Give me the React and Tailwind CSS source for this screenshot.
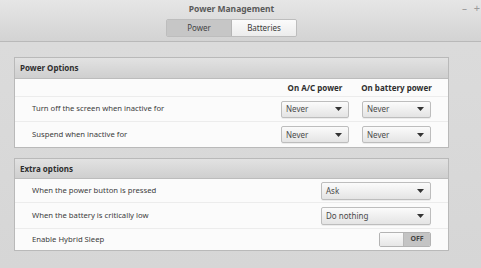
import React from "react";

const Caret = () => (
  <svg width="7" height="4" viewBox="0 0 7 4" className="shrink-0">
    <path d="M0 0 L7 0 L3.5 4 Z" fill="#333" />
  </svg>
);

function Combo({ label, w, h = "h-[17px]" }) {
  return (
    <div
      className={`${w} ${h} flex items-center justify-between pl-[4px] pr-[6px] rounded-[2px] border border-[#bdbdbd] bg-gradient-to-b from-[#fbfbfb] to-[#e4e4e4] text-[8px] text-[#4a4a4a] shadow-[0_1px_0_rgba(0,0,0,0.06)]`}
    >
      <span>{label}</span>
      <Caret />
    </div>
  );
}

function Row({ label, h, children, last }) {
  return (
    <div
      className={`${h} flex items-center pl-[17px] pr-[17px] ${last ? "" : "border-b border-[#ececec]"}`}
    >
      <div className="flex-1 text-[7.7px] text-[#3c3c3c]">{label}</div>
      {children}
    </div>
  );
}

function PanelHeader({ title, h }) {
  return (
    <div
      className={`${h} flex items-center pl-[5px] border-b border-[#bcbcbc] bg-gradient-to-b from-[#e2e2e2] to-[#cfcfcf] text-[8px] font-bold text-[#2e2e2e]`}
    >
      {title}
    </div>
  );
}

export default function App() {
  return (
    <div
      className="w-[481px] h-[268px] overflow-hidden bg-gradient-to-b from-[#dcdcdc] to-[#d6d6d6]"
      style={{ fontFamily: '"Noto Sans", "Open Sans", sans-serif' }}
    >
      {/* Title bar */}
      <div className="relative h-[42px] border-b border-[#b9b9b9] bg-gradient-to-b from-[#e6e6e6] to-[#d3d3d3] flex flex-col items-center pr-[18px]">
        <div className="pt-[2px] h-[19px] text-[8.5px] font-bold text-[#5a5a5a] leading-[14px]">
          Power Management
        </div>
        <div className="flex h-[18px] border border-[#bdbdbd] rounded-[2px] overflow-hidden text-[8px] text-[#3a3a3a]">
          <div className="w-[65px] flex items-center justify-center bg-[#c6c6c6] border-r border-[#b5b5b5] text-[#444]">
            Power
          </div>
          <div className="w-[64px] flex items-center justify-center bg-gradient-to-b from-[#fbfbfb] to-[#ececec]">
            Batteries
          </div>
        </div>
        <div className="absolute right-[14px] top-[2px] text-[10px] text-[#9a9a9a] leading-[12px]">–</div>
        <div className="absolute right-[1px] top-[2px] text-[11px] text-[#9a9a9a] leading-[12px]">+</div>
      </div>

      <div className="pl-[14px] pr-[32px] pt-[15px] flex flex-col gap-[10px]">
        {/* Power Options */}
        <div className="border border-[#b9b9b9] bg-[#fbfbfb]">
          <PanelHeader title="Power Options" h="h-[21px]" />
          <div className="h-[18px] flex items-center pr-[17px] border-b border-[#ececec] text-[8px] font-bold text-[#2e2e2e] whitespace-nowrap">
            <div className="flex-1" />
            <div className="w-[68px] flex justify-center">On A/C power</div>
            <div className="w-[13px]" />
            <div className="w-[69px] flex justify-center">On battery power</div>
          </div>
          <Row label="Turn off the screen when inactive for" h="h-[25px]">
            <div className="flex gap-[13px]">
              <Combo label="Never" w="w-[68px]" />
              <Combo label="Never" w="w-[69px]" />
            </div>
          </Row>
          <Row label="Suspend when inactive for" h="h-[25px]" last>
            <div className="flex gap-[13px]">
              <Combo label="Never" w="w-[68px]" />
              <Combo label="Never" w="w-[69px]" />
            </div>
          </Row>
        </div>

        {/* Extra options */}
        <div className="border border-[#b9b9b9] bg-[#fbfbfb]">
          <PanelHeader title="Extra options" h="h-[20px]" />
          <Row label="When the power button is pressed" h="h-[24px]">
            <Combo label="Ask" w="w-[110px]" h="h-[18px]" />
          </Row>
          <Row label="When the battery is critically low" h="h-[26px]">
            <Combo label="Do nothing" w="w-[110px]" h="h-[18px]" />
          </Row>
          <Row label="Enable Hybrid Sleep" h="h-[21px]" last>
            <div className="w-[52px] h-[15px] flex rounded-[2px] border border-[#b3b3b3] overflow-hidden">
              <div className="w-[24px] bg-gradient-to-b from-[#fbfbfb] to-[#e6e6e6] border-r border-[#b8b8b8]" />
              <div className="flex-1 flex items-center justify-center bg-[#c4c4c4] text-[7px] font-bold text-[#444]">
                OFF
              </div>
            </div>
          </Row>
        </div>
      </div>
    </div>
  );
}
